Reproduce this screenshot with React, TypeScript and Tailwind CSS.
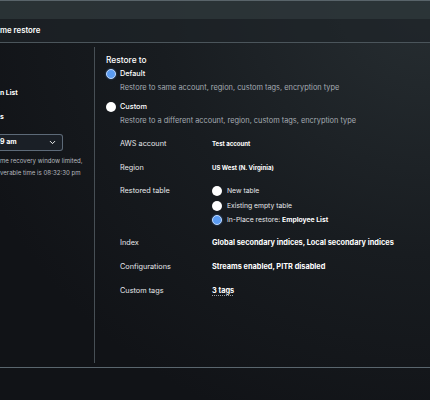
import { ChevronDown } from "lucide-react";

function Radio({ checked }: { checked?: boolean }) {
  if (checked) {
    return (
      <span className="w-[10px] h-[10px] shrink-0 rounded-full bg-[#5b9cf2] border-[1.5px] border-[#c0d8fb] shadow-[0_0_2px_rgba(91,156,242,0.6)]" />
    );
  }
  return <span className="w-[10px] h-[10px] shrink-0 rounded-full bg-white" />;
}

const rows = [
  { label: "AWS account", value: "Test account" },
  { label: "Region", value: "US West (N. Virginia)" },
];

const subOptions = [
  { label: "New table" },
  { label: "Existing empty table" },
  { label: "In-Place restore: ", strong: "Employee List", checked: true },
];

export default function App() {
  return (
    <div className="w-[430px] h-[400px] overflow-hidden text-[#e8eaed] font-['Inter',sans-serif] bg-[#111317] bg-[radial-gradient(ellipse_at_top_right,#272e32_0%,#181c20_45%,#111317_80%)]">
      {/* top strip */}
      <div className="h-[19px] border-t border-[#59646a] bg-[#2c3538]/90" />

      {/* header */}
      <div className="h-[24px] flex items-center border-b border-[#4b555b] bg-[#1e2428]/70">
        <span className="text-[7.8px] font-semibold text-white">me restore</span>
      </div>

      <div className="flex h-[325px] border-b border-[#5a666e]">
        {/* left column (cut off) */}
        <div className="w-[95px] my-[4px] border-r border-[#474f55] flex flex-col">
          <div className="mt-[39px] h-[14px] flex items-center text-[6.8px] font-bold text-white">n List</div>
          <div className="mt-[10px] h-[14px] flex items-center text-[6.8px] font-bold text-white">s</div>
          <div className="mt-[10px] w-[63px] h-[17px] flex items-center justify-between pr-[5px] rounded-r-[3px] border border-l-0 border-[#5d6a78] bg-[#1a1f26]">
            <span className="text-[7px] font-bold text-white">9 am</span>
            <ChevronDown className="w-[9px] h-[9px] text-white" strokeWidth={2.5} />
          </div>
          <div className="mt-[4px] text-[6.1px] leading-[11.5px] text-[#b4b9bf]">
            <div>me recovery window limited,</div>
            <div>verable time is 08:32:30 pm</div>
          </div>
        </div>

        {/* right column */}
        <div className="flex-1 pl-[11px] flex flex-col">
          <div className="mt-[10px] h-[14px] flex items-center text-[8.4px] font-medium text-white">Restore to</div>

          <div className="h-[14px] flex items-center gap-[4px]">
            <Radio checked />
            <span className="text-[7.3px] font-medium text-white">Default</span>
          </div>
          <div className="pl-[14px] h-[14px] flex items-center text-[7.4px] text-[#a5abb2]">
            Restore to same account, region, custom tags, encryption type
          </div>

          <div className="mt-[5px] h-[14px] flex items-center gap-[4px]">
            <Radio />
            <span className="text-[7.3px] font-medium text-white">Custom</span>
          </div>
          <div className="pl-[14px] h-[14px] flex items-center text-[7.4px] text-[#a5abb2]">
            Restore to a different account, region, custom tags, encryption type
          </div>

          <div className="mt-[4px] pl-[14px] flex flex-col">
            {rows.map((r) => (
              <div key={r.label} className="h-[24px] flex items-center">
                <span className="w-[92px] text-[7.3px] text-[#e6e8eb]">{r.label}</span>
                <span className="text-[6.05px] font-bold text-white">{r.value}</span>
              </div>
            ))}

            <div className="flex pt-[4px] pb-[3.5px]">
              <span className="w-[92px] h-[14px] flex items-center text-[7.3px] text-[#e6e8eb]">Restored table</span>
              <div className="flex flex-col">
                {subOptions.map((o) => (
                  <div key={o.label} className="h-[14.5px] flex items-center gap-[5px]">
                    <Radio checked={o.checked} />
                    <span className="text-[6.8px] text-[#e6e8eb]">
                      {o.label}
                      {o.strong && <span className="font-bold text-white">{o.strong}</span>}
                    </span>
                  </div>
                ))}
              </div>
            </div>

            <div className="h-[24px] flex items-center">
              <span className="w-[92px] text-[7.3px] text-[#e6e8eb]">Index</span>
              <span className="text-[7.35px] font-bold text-white">
                Global secondary indices, Local secondary indices
              </span>
            </div>
            <div className="h-[24px] flex items-center">
              <span className="w-[92px] text-[7.3px] text-[#e6e8eb]">Configurations</span>
              <span className="text-[7.35px] font-bold text-white">Streams enabled, PITR disabled</span>
            </div>
            <div className="h-[24px] flex items-center">
              <span className="w-[92px] text-[7.3px] text-[#e6e8eb]">Custom tags</span>
              <span className="text-[7.35px] font-bold text-white underline decoration-dotted decoration-[#9aa0a6] underline-offset-2">
                3 tags
              </span>
            </div>
          </div>
        </div>
      </div>
    </div>
  );
}
